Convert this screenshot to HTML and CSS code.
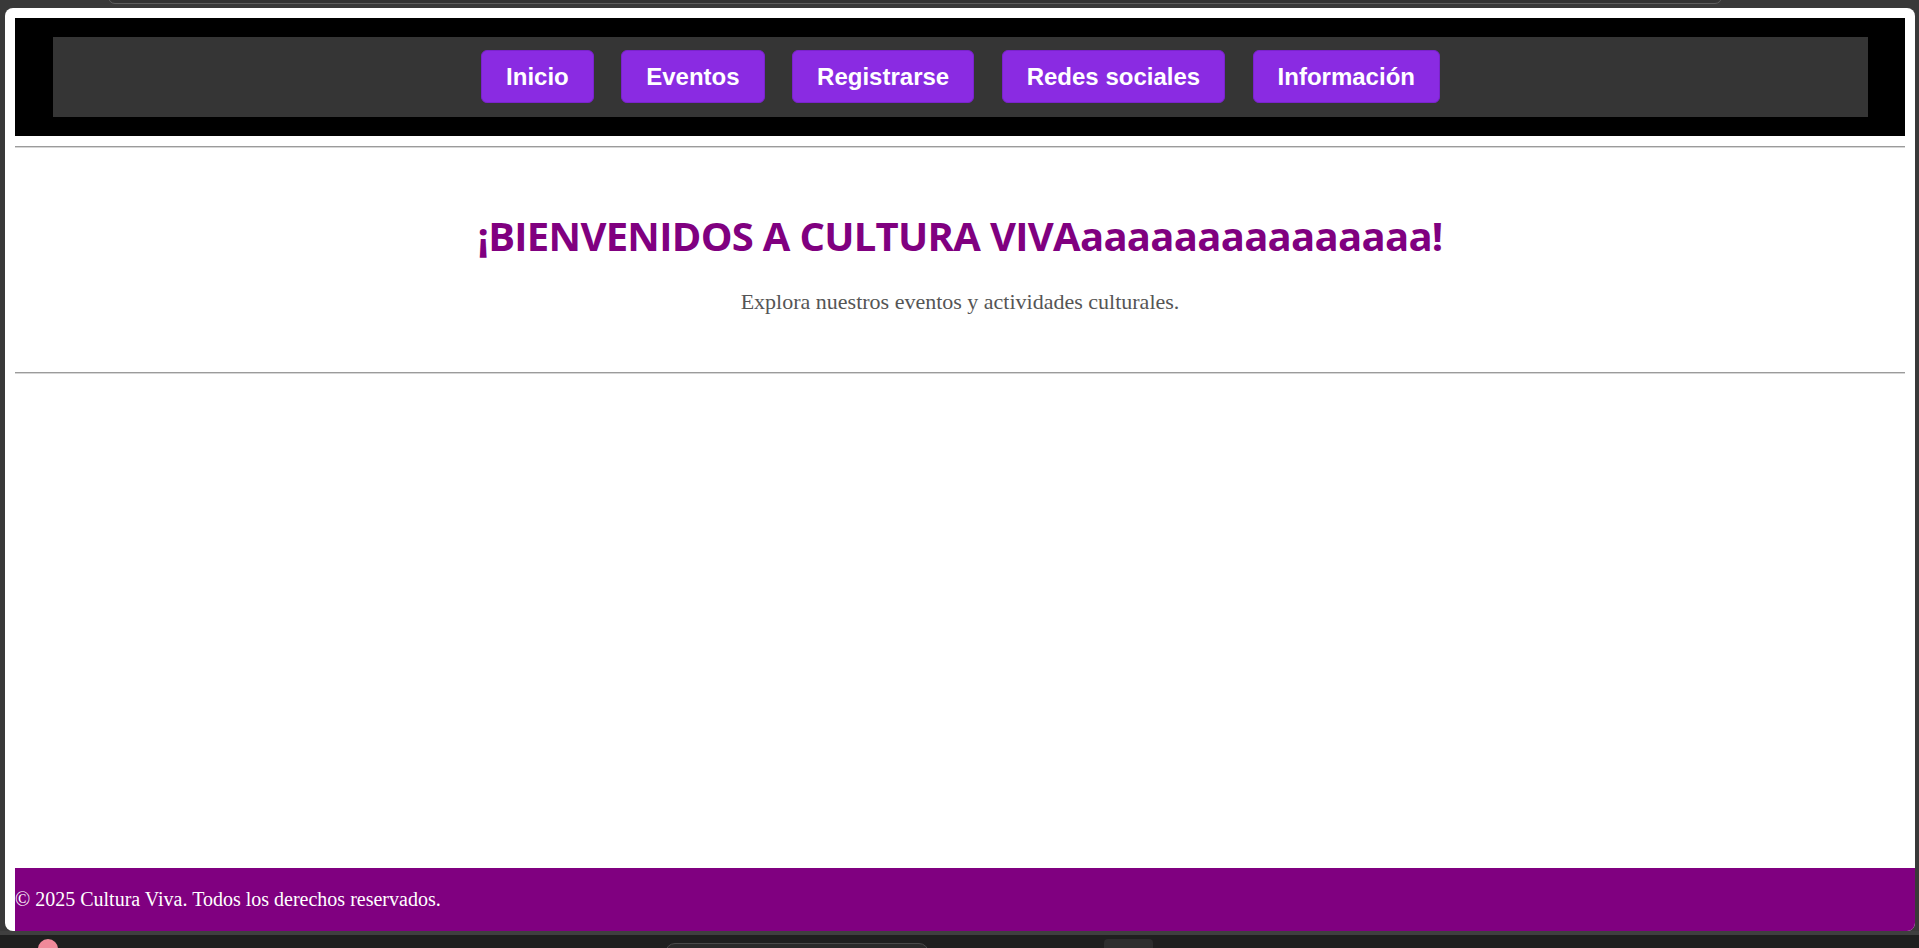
FILE: index.html
```html
<!DOCTYPE html>
<html lang="es">
<head>
<meta charset="utf-8">
<title>Cultura Viva</title>
<link rel="stylesheet" href="styles.css">
</head>
<body>
<div class="desktop">
  <div class="tabbar"></div>
  <div class="window">
    <div class="page">
      <header class="site-header">
        <nav class="main-nav">
          <a class="nav-btn" href="#">Inicio</a>
          <a class="nav-btn" href="#">Eventos</a>
          <a class="nav-btn" href="#">Registrarse</a>
          <a class="nav-btn" href="#">Redes sociales</a>
          <a class="nav-btn" href="#">Información</a>
        </nav>
      </header>
      <hr class="rule">
      <section class="welcome">
        <h1 class="welcome-title">¡BIENVENIDOS A CULTURA VIVAaaaaaaaaaaaaaaa!</h1>
        <p class="welcome-text">Explora nuestros eventos y actividades culturales.</p>
      </section>
      <hr class="rule">
    </div>
    <footer class="site-footer">
      <p class="footer-text">© 2025 Cultura Viva. Todos los derechos reservados.</p>
    </footer>
  </div>
  <div class="taskbar">
    <span class="task-dot"></span>
    <span class="task-search"></span>
    <span class="task-icon"></span>
  </div>
</div>
</body>
</html>
```
FILE: styles.css
```css
html, body {
  margin: 0;
  padding: 0;
  height: 100%;
  overflow: hidden;
}

body {
  background: #393939;
}

.desktop {
  position: relative;
  height: 948px;
  display: flex;
  flex-direction: column;
}

.tabbar {
  position: absolute;
  top: -10px;
  left: 108px;
  width: 1612px;
  height: 12px;
  border: 1px solid #5e5e5e;
  border-radius: 8px;
  background: #333333;
}

.window {
  position: relative;
  margin: 8px 4px 0 5px;
  height: 923px;
  background: #ffffff;
  border-radius: 8px;
  overflow: hidden;
}

.page {
  padding: 10px;
}

.site-header {
  background: #000000;
  padding: 19px 37px 19px 38px;
}

.main-nav {
  background: #353535;
  padding: 13px 0 14px;
  display: flex;
  justify-content: center;
  gap: 27.5px;
}

.nav-btn {
  display: block;
  background: #8a2be2;
  color: #ffffff;
  text-decoration: none;
  font-family: "Liberation Sans", Arial, sans-serif;
  font-weight: 700;
  font-size: 24px;
  line-height: 27.6px;
  padding: 11.5px 24px;
  border: 1px solid #7a23cc;
  border-radius: 6px;
}

.rule {
  margin: 10px 0;
  height: 0;
  border: none;
  border-top: 1px solid #9b9b9b;
  border-bottom: 1px solid #d6d6d6;
}

.welcome {
  padding: 51px 0 48px;
  text-align: center;
}

.welcome-title {
  margin: 0 0 27px;
  font-family: "Open Sans", "Noto Sans", sans-serif;
  font-weight: 700;
  font-size: 40px;
  line-height: 53px;
  letter-spacing: -0.7px;
  color: #800080;
}

.welcome-text {
  margin: 0;
  font-family: "Liberation Serif", "Times New Roman", serif;
  font-size: 22px;
  line-height: 25px;
  color: #555555;
}

.site-footer {
  position: absolute;
  left: 10px;
  right: 0;
  bottom: 0;
  background: #800080;
  padding: 20px 0;
}

.footer-text {
  margin: 0;
  font-family: "Liberation Serif", "Times New Roman", serif;
  font-size: 20px;
  line-height: 23px;
  color: #ffffff;
}

.taskbar {
  flex: 1;
  margin-top: 0;
  border-top: 4px solid #3f3f3f;
  background: #1f1f1f;
  position: relative;
}

.task-dot {
  position: absolute;
  left: 38px;
  top: 4px;
  width: 20px;
  height: 20px;
  border-radius: 50%;
  background: #f08a9a;
}

.task-search {
  position: absolute;
  left: 665px;
  top: 8px;
  width: 262px;
  height: 20px;
  border: 1px solid #4a4a4a;
  border-radius: 10px;
  background: #2a2a2a;
}

.task-icon {
  position: absolute;
  left: 1104px;
  top: 4px;
  width: 49px;
  height: 20px;
  border-radius: 4px;
  background: #2e2e2e;
}
```
